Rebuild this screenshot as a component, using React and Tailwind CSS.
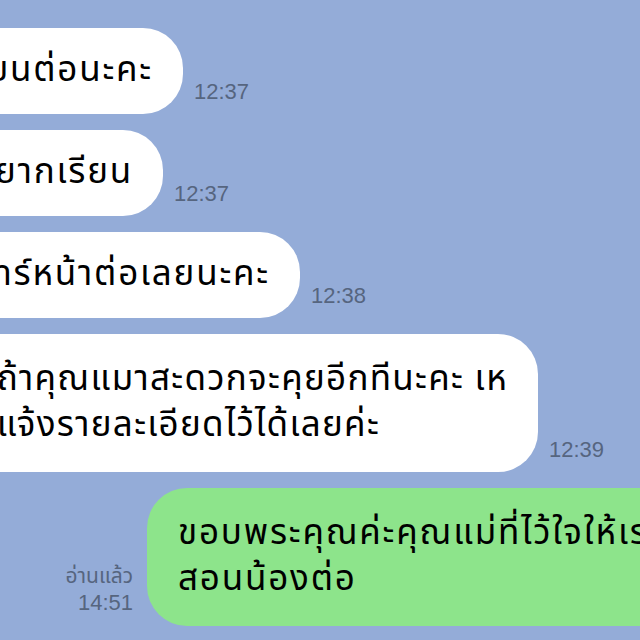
import React from 'react';

const thai = { fontFamily: '"Noto Sans Thai", "Noto Sans", "Liberation Sans", sans-serif' };

// Incoming bubble whose left part runs off the screen
const Incoming = ({ right, time, lines, tall = false }) => {
  return (
    <div className="flex items-end shrink-0">
      <div className={`flex justify-end shrink-0 ${right}`}>
        <div
          className={`bg-white text-black whitespace-nowrap rounded-[40px] pr-[30px] pl-[40px] text-[35px] leading-[46px] ${tall ? 'py-[23px] tracking-[1.3px]' : 'py-[20px] tracking-[1.8px]'}`}
          style={thai}
        >
          {lines.map((l, i) => (
            <div key={i}>{l}</div>
          ))}
        </div>
      </div>
      <span className="ml-[11px] mb-[11px] text-[22px] leading-none text-[#56657f] font-['Liberation_Sans',sans-serif]">
        {time}
      </span>
    </div>
  );
};

export default function App() {
  return (
    <div className="w-[640px] h-[640px] overflow-hidden bg-[#94acd8] flex flex-col gap-4 pt-[28px]">
      <Incoming right="w-[183px]" time="12:37" lines={['ค่ะ เรียนต่อนะคะ']} />
      <Incoming right="w-[163px]" time="12:37" lines={['น้องอยากเรียน']} />
      <Incoming right="w-[300px]" time="12:38" lines={['ตั้งแต่วันจันทร์หน้าต่อเลยนะคะ']} />
      <Incoming
        right="w-[538px]"
        time="12:39"
        tall
        lines={['ถ้าคุณแมาสะดวกจะคุยอีกทีนะคะ เห', 'แจ้งรายละเอียดไว้ได้เลยค่ะ']}
      />

      {/* Outgoing message with read receipt */}
      <div className="flex items-end shrink-0">
        <div className="w-[133px] shrink-0 flex flex-col items-end mb-[11px] text-[#56657f]">
          <span className="text-[21px] leading-[27px]" style={thai}>อ่านแล้ว</span>
          <span className="text-[22px] leading-[25px] font-['Liberation_Sans',sans-serif]">14:51</span>
        </div>
        <div
          className="ml-[14px] shrink-0 bg-[#8de48b] text-black whitespace-nowrap rounded-[40px] pl-[31px] pr-[40px] py-[23px] text-[35px] tracking-[1.8px] leading-[46px]"
          style={thai}
        >
          <div>ขอบพระคุณค่ะคุณแม่ที่ไว้ใจให้เราได้</div>
          <div>สอนน้องต่อ</div>
        </div>
      </div>
    </div>
  );
}
